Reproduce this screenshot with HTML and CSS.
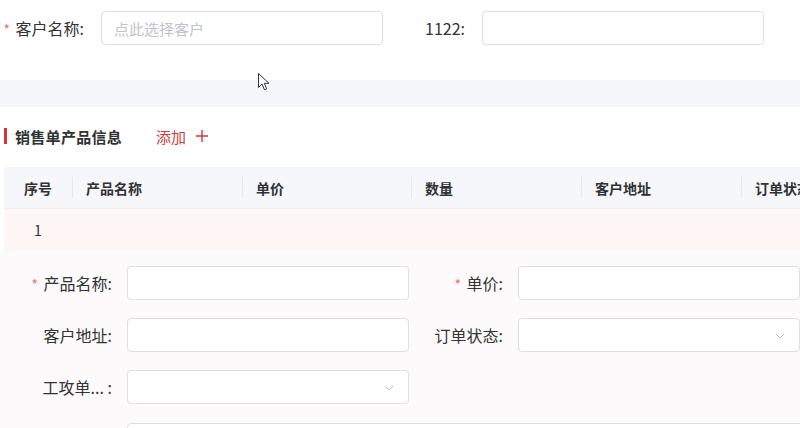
FILE: index.html
```html
<!DOCTYPE html>
<html lang="zh-CN">
<head>
    <meta charset="UTF-8">
    <meta name="viewport" content="width=device-width, initial-scale=1.0">
    <title>销售单</title>
    <link rel="stylesheet" href="styles.css">
</head>
<body>
<div class="page">
    <form class="head-form">
        <label class="head-label" for="customerInput"><span class="required">*</span> 客户名称:</label>
        <input type="text" id="customerInput" class="text-input" placeholder="点此选择客户" readonly>
        <label class="head-label" for="codeInput">1122:</label>
        <input type="text" id="codeInput" class="text-input">
    </form>

    <div class="band"></div>

    <section class="goods">
        <div class="section-title">
            <span class="title-bar"></span>
            <span class="title-text">销售单产品信息</span>
            <a class="add-link">添加
                <svg class="plus-icon" width="14" height="14" viewBox="0 0 14 14">
                    <path d="M7 1v12M1 7h12" stroke="currentColor" stroke-width="1.4" fill="none"/>
                </svg>
            </a>
        </div>

        <table class="goods-table">
            <colgroup>
                <col class="col-index">
                <col class="col-wide">
                <col class="col-price">
                <col class="col-wide">
                <col class="col-address">
                <col class="col-wide">
            </colgroup>
            <thead>
            <tr>
                <th>序号</th>
                <th>产品名称</th>
                <th>单价</th>
                <th>数量</th>
                <th>客户地址</th>
                <th>订单状态</th>
            </tr>
            </thead>
            <tbody>
            <tr>
                <td>1</td>
                <td></td>
                <td></td>
                <td></td>
                <td></td>
                <td></td>
            </tr>
            </tbody>
        </table>

        <div class="row-detail">
            <div class="field">
                <label for="productName"><span class="required">*</span> 产品名称:</label>
                <input type="text" id="productName" class="text-input">
            </div>
            <div class="field">
                <label for="unitPrice"><span class="required">*</span> 单价:</label>
                <input type="text" id="unitPrice" class="text-input">
            </div>
            <div class="field">
                <label for="address">客户地址:</label>
                <input type="text" id="address" class="text-input">
            </div>
            <div class="field">
                <label>订单状态:</label>
                <div class="select-box">
                    <svg class="arrow-down" width="10" height="6" viewBox="0 0 10 6">
                        <path d="M1 1l4 4 4-4" stroke="currentColor" stroke-width="1" fill="none"/>
                    </svg>
                </div>
            </div>
            <div class="field">
                <label>工攻单... :</label>
                <div class="select-box">
                    <svg class="arrow-down" width="10" height="6" viewBox="0 0 10 6">
                        <path d="M1 1l4 4 4-4" stroke="currentColor" stroke-width="1" fill="none"/>
                    </svg>
                </div>
            </div>
            <div class="field"></div>
            <div class="field field-wide">
                <label></label>
                <textarea class="text-area"></textarea>
            </div>
        </div>
    </section>
</div>

<svg class="mouse-cursor" width="12" height="18" viewBox="0 0 12 18">
    <path d="M0.5 0.5V14.5L4 11L6.5 16.8L8.7 15.9L6.3 10.3H11Z" fill="#fff" stroke="#333" stroke-width="1"/>
</svg>
</body>
</html>
```

FILE: styles.css
```css
body, html {
    margin: 0;
    padding: 0;
    width: 800px;
    height: 428px;
    overflow: hidden;
    background-color: #fff;
    font-family: "Noto Sans CJK SC", "Liberation Sans", sans-serif;
    font-size: 16px;
    color: #333;
}

.page {
    width: 1000px;
}

.required {
    color: #f56c6c;
    font-size: 14px;
    margin-right: 2px;
}

.text-input {
    height: 34px;
    padding: 0 12px;
    border: 1px solid #dcdfe6;
    border-radius: 4px;
    box-sizing: border-box;
    background-color: #fff;
    font-family: inherit;
    font-size: 15px;
    color: #333;
    outline: none;
}

.text-input::placeholder {
    color: #c0c4cc;
}

/* 顶部客户信息 */
.head-form {
    display: grid;
    grid-template-columns: 101px 282px 99px 282px;
    align-items: center;
    align-content: start;
    height: 80px;
    margin: 0;
    padding-top: 11px;
    box-sizing: border-box;
}

.head-label {
    padding-right: 17px;
    text-align: right;
    white-space: nowrap;
}

.band {
    height: 27px;
    background-color: #f5f6f9;
}

/* 产品信息 */
.goods {
    padding: 18px 0 0 4px;
}

.section-title {
    display: flex;
    align-items: center;
    height: 22px;
}

.title-bar {
    width: 3px;
    height: 16px;
    background-color: #d9303a;
    margin-right: 8px;
}

.title-text {
    font-size: 15px;
    font-weight: bold;
    color: #303133;
    letter-spacing: 0.3px;
}

.add-link {
    display: flex;
    align-items: center;
    margin-left: 34px;
    font-size: 15px;
    color: #d23a3f;
    cursor: pointer;
}

.plus-icon {
    margin-left: 9px;
}

.goods-table {
    table-layout: fixed;
    width: 907px;
    margin-top: 20px;
    border-collapse: collapse;
}

.col-index {
    width: 68px;
}

.col-wide {
    width: 170px;
}

.col-price {
    width: 169px;
}

.col-address {
    width: 160px;
}

.goods-table th {
    position: relative;
    height: 41px;
    padding: 0 14px;
    background-color: #f5f7fa;
    border-bottom: 1px solid #ebeef5;
    font-size: 14px;
    font-weight: bold;
    color: #303133;
    text-align: left;
    white-space: nowrap;
    overflow: hidden;
}

.goods-table th + th::before {
    content: "";
    position: absolute;
    left: 0;
    top: 10px;
    bottom: 10px;
    width: 1px;
    background-color: #e6e8ec;
}

.goods-table th:first-child,
.goods-table td:first-child {
    padding: 0;
    text-align: center;
}

.goods-table td {
    height: 42px;
    padding: 0 14px;
    background-color: #fdf6f5;
    font-size: 14px;
    color: #333;
}

/* 展开的行详情 */
.row-detail {
    display: grid;
    grid-template-columns: 391px 391px;
    row-gap: 18px;
    margin-left: -4px;
    padding: 15px 0 0 18px;
    background-color: #fcfafb;
}

.field {
    display: grid;
    grid-template-columns: 109px 282px;
    align-items: center;
    min-height: 34px;
}

.field label {
    padding-right: 15px;
    text-align: right;
    white-space: nowrap;
}

.field-wide {
    grid-column: 1 / -1;
    grid-template-columns: 109px 700px;
    margin-top: 1px;
}

.select-box {
    position: relative;
    height: 34px;
    border: 1px solid #dcdfe6;
    border-radius: 4px;
    box-sizing: border-box;
    background-color: #fff;
}

.arrow-down {
    position: absolute;
    right: 14px;
    top: 14px;
    color: #c0c4cc;
}

.text-area {
    height: 60px;
    border: 1px solid #dcdfe6;
    border-radius: 4px;
    box-sizing: border-box;
    background-color: #fff;
    resize: none;
}

.mouse-cursor {
    position: absolute;
    left: 258px;
    top: 73px;
}
```
